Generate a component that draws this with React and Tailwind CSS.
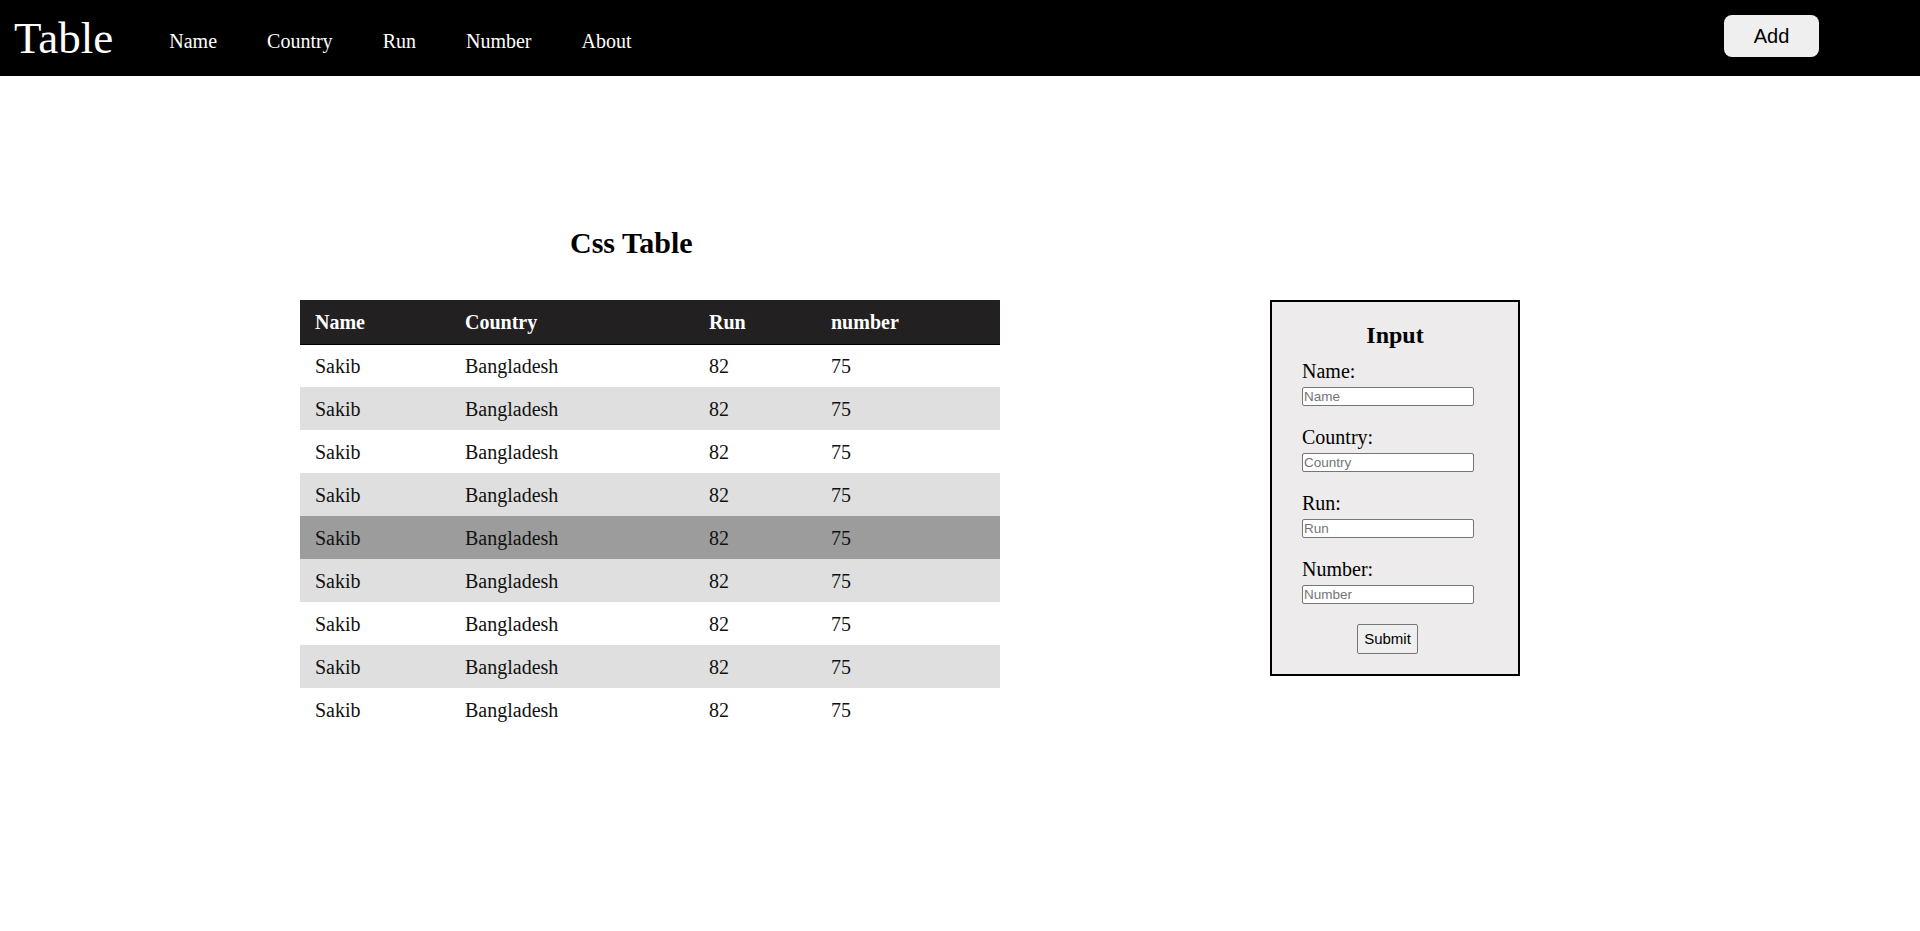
import { useState } from 'react'

const serif = { fontFamily: '"Liberation Serif", "Times New Roman", serif' }
const sans = { fontFamily: '"Liberation Sans", Arial, sans-serif' }

const ROWS = Array.from({ length: 9 }, () => ({
  name: 'Sakib',
  country: 'Bangladesh',
  run: 82,
  number: 75,
}))

const FIELDS = ['Name', 'Country', 'Run', 'Number']

function Navbar() {
  return (
    <nav className="flex h-[76px] items-center bg-black text-white">
      <span className="pl-[14px] pt-[1px] text-[45px] leading-none">Table</span>
      <ul className="ml-[56px] flex items-center gap-[50px] pt-[6px] text-[20px]">
        {['Name', 'Country', 'Run', 'Number', 'About'].map((item) => (
          <li key={item}>
            <a href="#" className="text-white">
              {item}
            </a>
          </li>
        ))}
      </ul>
      <button
        type="button"
        className="mb-[5px] ml-auto mr-[101px] h-[42px] w-[95px] rounded-lg bg-[#efefef] text-[20px] text-black"
        style={sans}
      >
        Add
      </button>
    </nav>
  )
}

function CssTable() {
  const [hovered, setHovered] = useState(4)

  return (
    <div className="ml-[300px] w-[700px]">
      <h2 className="pl-[270px] pt-[2px] text-[30px] font-bold leading-[33px] text-black">Css Table</h2>
      <table className="mt-[41px] w-[700px] border-collapse text-left text-[20px]">
        <thead>
          <tr className="h-[44px] border-b border-black bg-[#222021] text-white">
            <th className="w-[150px] pl-[15px] font-bold">Name</th>
            <th className="w-[244px] pl-[15px] font-bold">Country</th>
            <th className="w-[122px] pl-[15px] font-bold">Run</th>
            <th className="w-[184px] pl-[15px] font-bold">number</th>
          </tr>
        </thead>
        <tbody>
          {ROWS.map((row, i) => (
            <tr
              key={i}
              onMouseEnter={() => setHovered(i)}
              className={
                hovered === i
                  ? 'h-[43px] bg-[#9c9c9c] text-[#111]'
                  : i % 2 === 1
                    ? 'h-[43px] bg-[#dfdfdf] text-[#111]'
                    : 'h-[43px] bg-white text-[#111]'
              }
            >
              <td className="pl-[15px]">{row.name}</td>
              <td className="pl-[15px]">{row.country}</td>
              <td className="pl-[15px]">{row.run}</td>
              <td className="pl-[15px]">{row.number}</td>
            </tr>
          ))}
        </tbody>
      </table>
    </div>
  )
}

function InputForm() {
  return (
    <form
      className="ml-[270px] mt-[76px] flex h-[376px] w-[250px] flex-col border-2 border-black bg-[#edebeb] pt-[19px]"
      onSubmit={(e) => e.preventDefault()}
    >
      <h2 className="text-center text-[24px] font-bold leading-[28px]">Input</h2>
      <div className="mt-[11px] flex flex-col gap-[20px] pl-[30px]">
        {FIELDS.map((field) => (
          <div key={field} className="flex flex-col">
            <label className="text-[20px] leading-[23px]">{field}:</label>
            <input
              type="text"
              placeholder={field}
              className="mt-[4px] h-[19px] w-[172px] rounded-[2px] border border-[#767676] bg-white px-[1px] text-[13.5px] leading-[15px] placeholder:text-[#757575]"
              style={sans}
            />
          </div>
        ))}
      </div>
      <div className="mt-[20px] flex justify-center pr-[15px]">
        <button
          type="submit"
          className="h-[30px] w-[61px] rounded-[2px] border border-[#767676] bg-[#efefef] text-[15px] text-black"
          style={sans}
        >
          Submit
        </button>
      </div>
    </form>
  )
}

export default function App() {
  return (
    <div className="min-h-[931px] bg-white" style={serif}>
      <Navbar />
      <main className="flex items-start pt-[148px]">
        <CssTable />
        <InputForm />
      </main>
    </div>
  )
}
